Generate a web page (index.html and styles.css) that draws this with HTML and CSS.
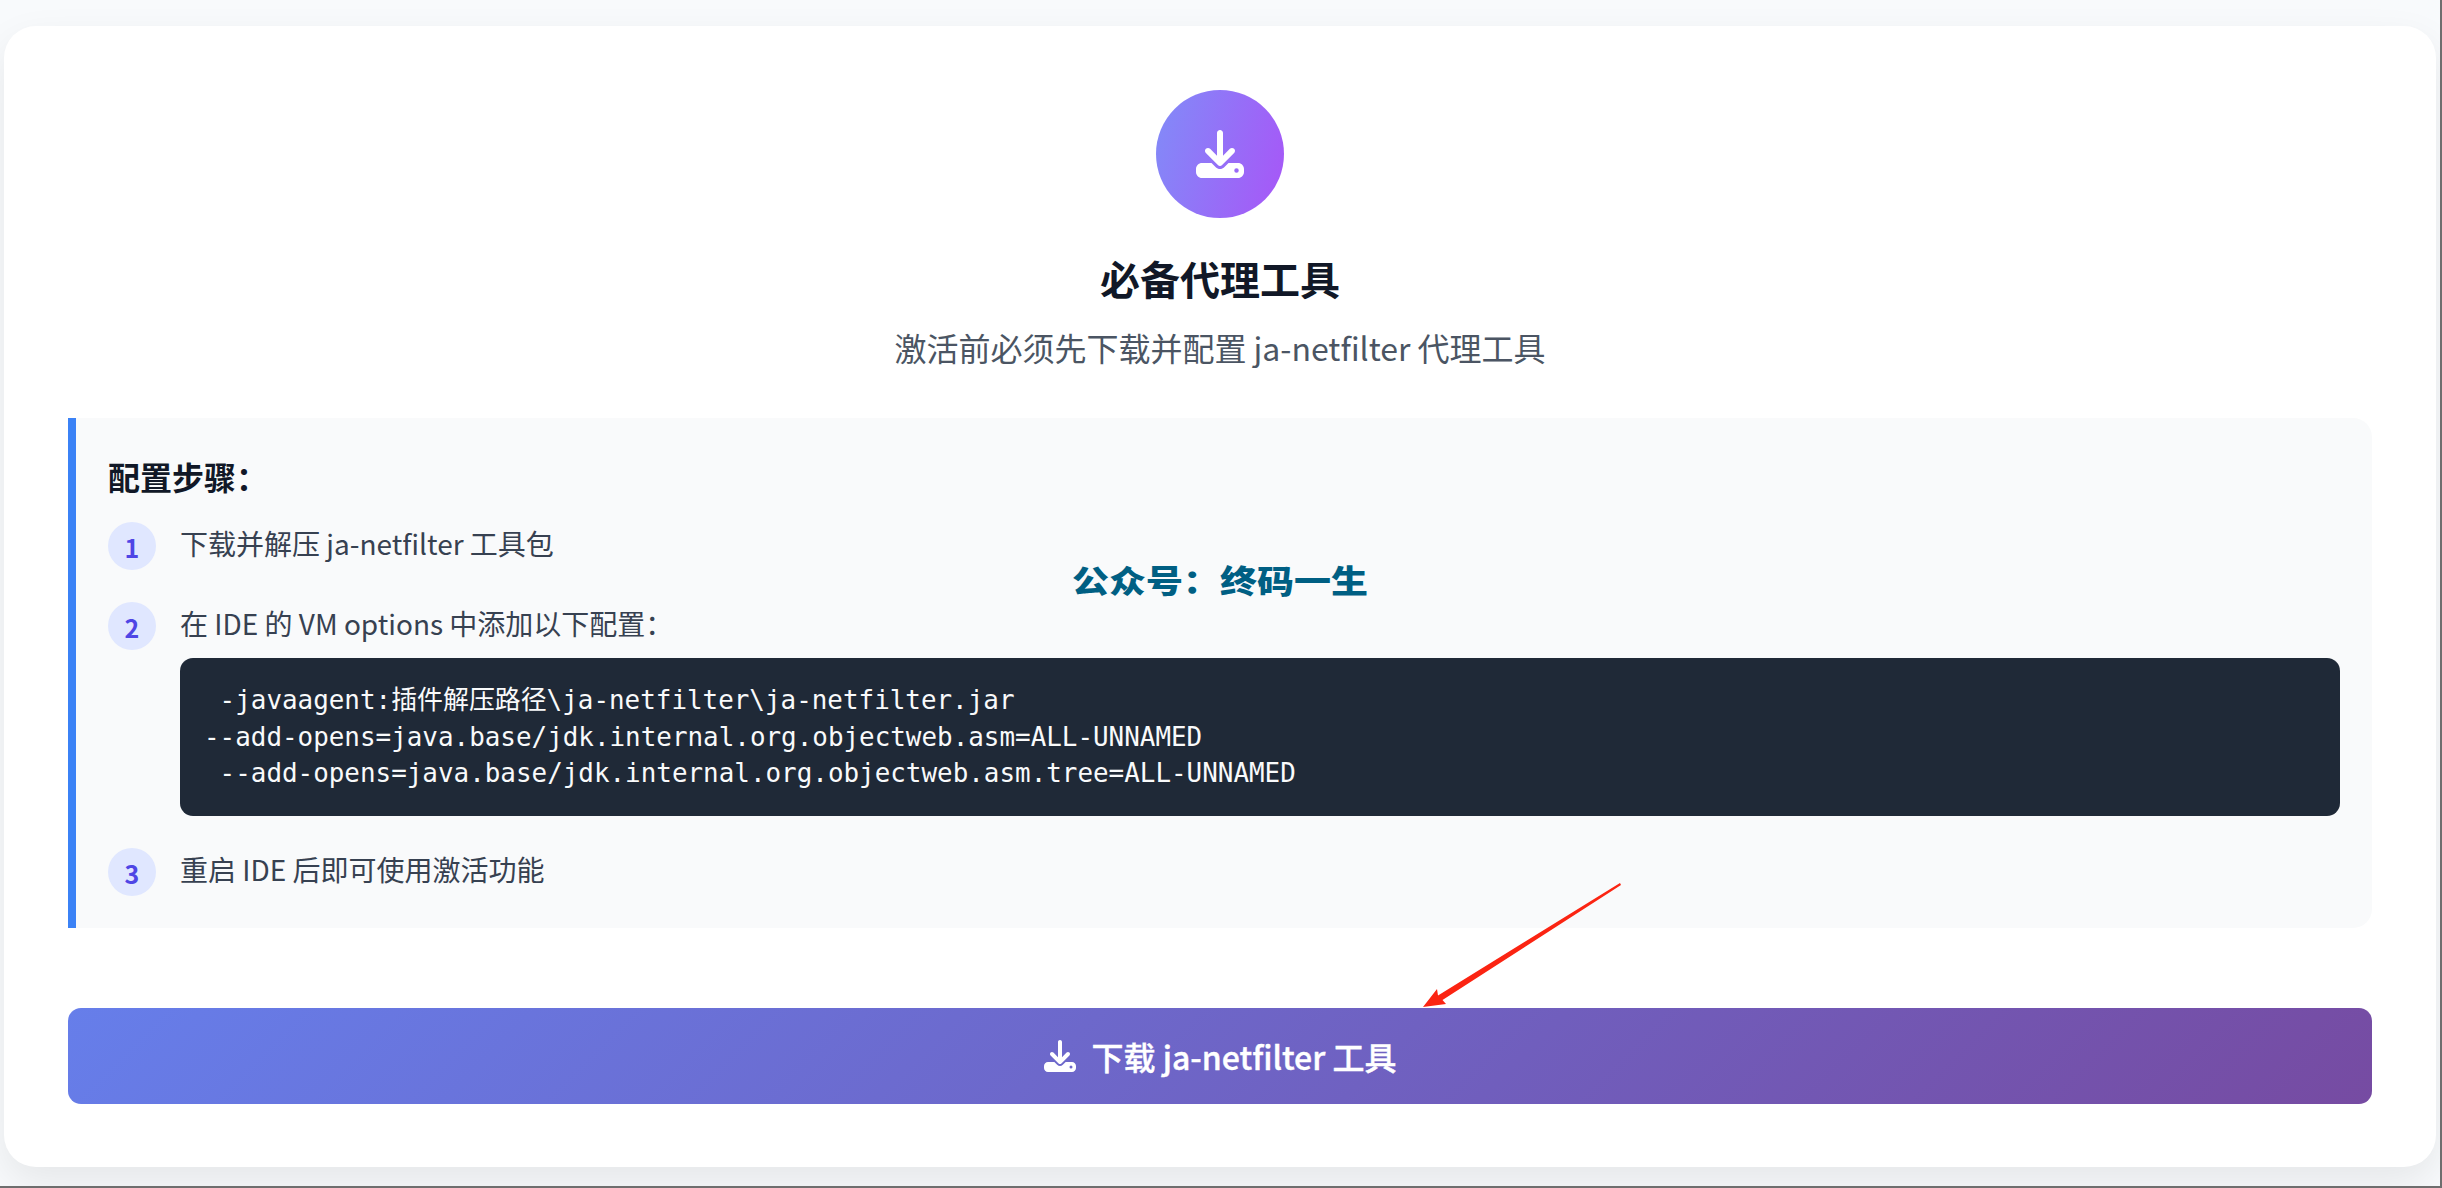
FILE: index.html
```html
<!DOCTYPE html>
<html lang="zh-CN">
<head>
    <meta charset="UTF-8">
    <meta name="viewport" content="width=device-width, initial-scale=1.0">
    <title>必备代理工具</title>
    <link rel="stylesheet" href="styles.css">
</head>
<body>
    <div class="card">
        <div class="header">
            <div class="header-icon">
                <svg class="icon-lg" viewBox="0 0 512 512"><path d="M288 32c0-17.700-14.300-32-32-32s-32 14.300-32 32V274.700l-73.400-73.400c-12.500-12.500-32.800-12.500-45.300 0s-12.500 32.800 0 45.300l128 128c12.500 12.500 32.800 12.500 45.300 0l128-128c12.500-12.500 12.500-32.800 0-45.300s-32.800-12.500-45.300 0L288 274.700V32zM64 352c-35.300 0-64 28.700-64 64v32c0 35.300 28.700 64 64 64H448c35.300 0 64-28.700 64-64V416c0-35.300-28.700-64-64-64H346.500l-45.300 45.300c-25 25-65.500 25-90.500 0L165.500 352H64zm368 56a24 24 0 1 1 0 48 24 24 0 1 1 0-48z"/></svg>
            </div>
            <h1 class="title">必备代理工具</h1>
            <p class="subtitle">激活前必须先下载并配置 ja-netfilter 代理工具</p>
        </div>

        <div class="steps-panel">
            <h2 class="steps-title">配置步骤：</h2>
            <ol class="steps">
                <li class="step">
                    <span class="step-num">1</span>
                    <div class="step-body">下载并解压 ja-netfilter 工具包</div>
                </li>
                <li class="step">
                    <span class="step-num">2</span>
                    <div class="step-body">在 IDE 的 VM options 中添加以下配置：
                        <pre class="code"> -javaagent:插件解压路径\ja-netfilter\ja-netfilter.jar
--add-opens=java.base/jdk.internal.org.objectweb.asm=ALL-UNNAMED
 --add-opens=java.base/jdk.internal.org.objectweb.asm.tree=ALL-UNNAMED</pre>
                    </div>
                </li>
                <li class="step">
                    <span class="step-num">3</span>
                    <div class="step-body">重启 IDE 后即可使用激活功能</div>
                </li>
            </ol>
        </div>

        <button class="download-btn">
            <svg class="icon-sm" viewBox="0 0 512 512"><path d="M288 32c0-17.700-14.300-32-32-32s-32 14.300-32 32V274.700l-73.400-73.400c-12.500-12.500-32.800-12.500-45.300 0s-12.500 32.800 0 45.300l128 128c12.500 12.500 32.800 12.500 45.300 0l128-128c12.500-12.500 12.500-32.800 0-45.300s-32.800-12.500-45.300 0L288 274.700V32zM64 352c-35.300 0-64 28.700-64 64v32c0 35.300 28.700 64 64 64H448c35.300 0 64-28.700 64-64V416c0-35.300-28.700-64-64-64H346.500l-45.300 45.300c-25 25-65.500 25-90.500 0L165.500 352H64zm368 56a24 24 0 1 1 0 48 24 24 0 1 1 0-48z"/></svg>
            下载 ja-netfilter 工具
        </button>

        <div class="watermark">公众号：终码一生</div>
        <svg class="arrow" viewBox="0 0 204 130" width="204" height="130"><polygon points="3,127 17,109 18,115.500 200,3 201,5 22.500,120 26,124"/></svg>
    </div>
</body>
</html>
```

FILE: styles.css
```css
* {
    box-sizing: border-box;
}
body {
    margin: 0;
    height: 1188px;
    overflow: hidden;
    font-family: "Noto Sans CJK SC", "Noto Sans", sans-serif;
    line-height: 1.6;
    background: #f8fafc;
    border-right: 2px solid #6e6e6e;
    border-bottom: 2px solid #6e6e6e;
}
.card {
    position: relative;
    margin: 26px 4px 0 4px;
    padding: 64px;
    height: 1141px;
    background: #fff;
    border-radius: 32px;
    box-shadow: 0 16px 40px rgba(0, 0, 0, 0.08);
}
.header {
    text-align: center;
    margin-bottom: 45px;
}
.header-icon {
    display: flex;
    justify-content: center;
    align-items: center;
    width: 128px;
    height: 128px;
    margin: 0 auto 28px;
    border-radius: 50%;
    background: linear-gradient(105deg, #818cf8, #a855f7);
}
.icon-lg {
    width: 48px;
    height: 48px;
    fill: #fff;
}
.title {
    margin: 0 0 12px;
    font-size: 40px;
    font-weight: 700;
    color: #111827;
}
.subtitle {
    margin: 0;
    font-size: 32px;
    color: #4b5563;
}
.steps-panel {
    padding: 32px;
    background: #f9fafb;
    border-left: 8px solid #3b82f6;
    border-radius: 0 19px 19px 0;
}
.steps-title {
    margin: 0 0 20px;
    font-size: 32px;
    font-weight: 700;
    line-height: 52px;
    color: #111827;
}
.steps {
    display: flex;
    flex-direction: column;
    gap: 32px;
    margin: 0;
    padding: 0;
    list-style: none;
}
.step {
    display: flex;
    gap: 24px;
    font-size: 28px;
    line-height: 42px;
    color: #374151;
}
.step-num {
    display: flex;
    flex-shrink: 0;
    justify-content: center;
    align-items: center;
    width: 48px;
    height: 48px;
    padding-top: 2px;
    border-radius: 50%;
    background: #e0e7ff;
    color: #4f46e5;
    font-size: 25px;
    font-weight: 700;
}
.step-body {
    flex: 1;
}
.code {
    margin: 14px 0 0;
    padding: 24px;
    background: #1f2937;
    border-radius: 13px;
    color: #f9fafb;
    font-family: "DejaVu Sans Mono", "Noto Sans CJK SC", monospace;
    font-size: 25.92px;
    line-height: 36.6px;
}
.download-btn {
    display: flex;
    justify-content: center;
    align-items: center;
    gap: 16px;
    width: 100%;
    height: 96px;
    margin-top: 80px;
    border: none;
    border-radius: 13px;
    background: linear-gradient(135deg, #667eea, #764ba2);
    color: #fff;
    font-family: inherit;
    font-size: 32px;
    font-weight: 500;
    -webkit-text-stroke: 0.4px #fff;
    cursor: pointer;
}
.icon-sm {
    width: 32px;
    height: 32px;
    fill: #fff;
}
.watermark {
    position: absolute;
    left: 1068px;
    top: 529px;
    font-size: 37px;
    font-weight: 900;
    line-height: 48px;
    white-space: nowrap;
    color: #005f83;
    transform: scaleY(0.85);
}
.arrow {
    position: absolute;
    left: 1416px;
    top: 854px;
    fill: #fb2412;
}
```
